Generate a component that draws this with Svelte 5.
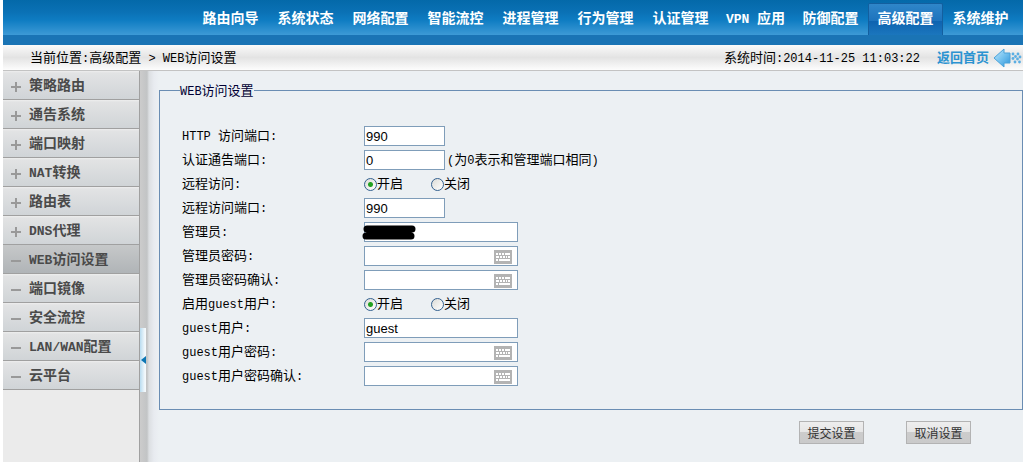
<script lang="ts">
	const nav = [
		'路由向导',
		'系统状态',
		'网络配置',
		'智能流控',
		'进程管理',
		'行为管理',
		'认证管理',
		'VPN 应用',
		'防御配置',
		'高级配置',
		'系统维护'
	];
	const activeNav = '高级配置';

	const menu = [
		{ label: '策略路由', group: true },
		{ label: '通告系统', group: true },
		{ label: '端口映射', group: true },
		{ label: 'NAT转换', group: true },
		{ label: '路由表', group: true },
		{ label: 'DNS代理', group: true },
		{ label: 'WEB访问设置', group: false },
		{ label: '端口镜像', group: false },
		{ label: '安全流控', group: false },
		{ label: 'LAN/WAN配置', group: false },
		{ label: '云平台', group: false }
	];
	const activeMenu = 'WEB访问设置';

	type Field = {
		id: string;
		label: string;
		kind: 'port' | 'radio' | 'text' | 'password';
		note?: string;
		masked?: boolean;
	};

	const fields: Field[] = [
		{ id: 'http-port', label: 'HTTP 访问端口:', kind: 'port' },
		{ id: 'notice-port', label: '认证通告端口:', kind: 'port', note: '(为0表示和管理端口相同)' },
		{ id: 'remote', label: '远程访问:', kind: 'radio' },
		{ id: 'remote-port', label: '远程访问端口:', kind: 'port' },
		{ id: 'admin', label: '管理员:', kind: 'text', masked: true },
		{ id: 'admin-pass', label: '管理员密码:', kind: 'password' },
		{ id: 'admin-pass2', label: '管理员密码确认:', kind: 'password' },
		{ id: 'guest-on', label: '启用guest用户:', kind: 'radio' },
		{ id: 'guest', label: 'guest用户:', kind: 'text' },
		{ id: 'guest-pass', label: 'guest用户密码:', kind: 'password' },
		{ id: 'guest-pass2', label: 'guest用户密码确认:', kind: 'password' }
	];

	let values: Record<string, string> = $state({
		'http-port': '990',
		'notice-port': '0',
		remote: 'on',
		'remote-port': '990',
		admin: '',
		'admin-pass': '',
		'admin-pass2': '',
		'guest-on': 'on',
		guest: 'guest',
		'guest-pass': '',
		'guest-pass2': ''
	});

	// Latin runs are set in a smaller monospace so they sit at half the Han width
	const runs = (text: string) => text.split(/([\x20-\x7e]+)/).filter(Boolean);
	const isLatin = (run: string) => /^[\x20-\x7e]/.test(run);
</script>

{#snippet mixed(text: string)}
	{#each runs(text) as run}{#if isLatin(run)}<span class="latin">{run}</span>{:else}{run}{/if}{/each}
{/snippet}

<div class="page">
	<nav class="topnav">
		{#each nav as item}
			<a href="#top" class:active={item === activeNav}>{@render mixed(item)}</a>
		{/each}
	</nav>

	<div class="crumbs">
		<span class="where">{@render mixed('当前位置:高级配置 > WEB访问设置')}</span>
		<span class="time">{@render mixed('系统时间:2014-11-25 11:03:22')}</span>
		<a class="home" href="#home">
			<span>返回首页</span>
			<svg width="29" height="20" viewBox="0 0 29 20" aria-hidden="true">
				<defs>
					<linearGradient id="arrow" x1="0" y1="0" x2="1" y2="1">
						<stop offset="0" stop-color="#c9e9fb" />
						<stop offset="0.5" stop-color="#74c2ef" />
						<stop offset="1" stop-color="#2e93d8" />
					</linearGradient>
				</defs>
				<path d="M1 10 L11 1 V5 H17 V15 H11 V19 Z" fill="url(#arrow)" stroke="#4aa3da" />
				<g fill="#5aaee3">
					<circle cx="20" cy="6" r="1.4" /><circle cx="25" cy="6" r="1.4" />
					<circle cx="22.5" cy="8.5" r="1.4" /><circle cx="27" cy="9" r="1.4" />
					<circle cx="20" cy="10.5" r="1.4" /><circle cx="24.5" cy="11" r="1.4" />
					<circle cx="22" cy="14" r="1.4" /><circle cx="26.5" cy="14" r="1.4" />
				</g>
			</svg>
		</a>
	</div>

	<div class="body">
		<aside>
			{#each menu as item}
				<a href="#menu" class:active={item.label === activeMenu}>
					<svg width="10" height="10" viewBox="0 0 10 10" aria-hidden="true">
						<path d={item.group ? 'M0 5H10M5 0V10' : 'M0 5H10'} stroke="#999" stroke-width="2" />
					</svg>
					<span>{@render mixed(item.label)}</span>
				</a>
			{/each}
		</aside>

		<div class="splitter">
			<button type="button" class="collapse" aria-label="收起菜单">
				<svg width="5" height="8" viewBox="0 0 5 8" aria-hidden="true"><path d="M0 4 L5 0 V8 Z" fill="#0b76b4" /></svg>
			</button>
		</div>

		<main>
			<form onsubmit={(e) => e.preventDefault()}>
				<fieldset>
					<legend>{@render mixed('WEB访问设置')}</legend>
					{#each fields as f}
						<div class="row">
							{#if f.kind === 'radio'}
								<span class="name" id={f.id}>{@render mixed(f.label)}</span>
								<div class="radios" role="radiogroup" aria-labelledby={f.id}>
									<label><input type="radio" name={f.id} value="on" bind:group={values[f.id]} /><span>开启</span></label>
									<label><input type="radio" name={f.id} value="off" bind:group={values[f.id]} /><span>关闭</span></label>
								</div>
							{:else}
								<label class="name" for={f.id}>{@render mixed(f.label)}</label>
								<div class="box" class:short={f.kind === 'port'}>
									{#if f.kind === 'password'}
										<input id={f.id} type="password" bind:value={values[f.id]} />
										<button type="button" class="keys" aria-label="软键盘">
											<svg width="18" height="14" viewBox="0 0 18 14" shape-rendering="crispEdges" aria-hidden="true">
												<rect width="18" height="14" fill="#b3b3b3" />
												<path
													d="M2 3h2v2H2zM5 3h2v2H5zM8 3h2v2H8zM11 3h5v2h-5zM2 6h3v2H2zM6 6h2v2H6zM9 6h2v2H9zM12 6h1v2h-1zM14 6h2v2h-2zM2 9h2v2H2zM5 9h11v2H5z"
													fill="#fff"
												/>
											</svg>
										</button>
									{:else}
										<input id={f.id} type="text" bind:value={values[f.id]} />
									{/if}
									{#if f.masked}
										<svg class="mask" width="56" height="18" viewBox="0 0 56 18" aria-hidden="true">
											<path d="M5 6 H50 M4 13 H49" stroke="#000" stroke-width="7" stroke-linecap="round" />
											<path d="M5 9 H49" stroke="#000" stroke-width="3" />
										</svg>
									{/if}
								</div>
								{#if f.note}<span class="note">{@render mixed(f.note)}</span>{/if}
							{/if}
						</div>
					{/each}
				</fieldset>
				<div class="actions">
					<button type="submit">提交设置</button>
					<button type="reset">取消设置</button>
				</div>
			</form>
		</main>
	</div>
</div>

<style>
	:global(body) {
		margin: 0;
		background: #fff;
	}

	.page {
		display: flex;
		flex-direction: column;
		box-sizing: border-box;
		min-height: 100vh;
		padding: 0 2px 0 3px;
		font: 13px/16px 'Noto Sans CJK SC', sans-serif;
		color: #000;
	}
	.latin {
		font-family: 'Liberation Mono', monospace;
		font-size: 12px;
		line-height: 12px;
		white-space: pre;
	}
	a {
		color: inherit;
		text-decoration: none;
	}

	/* top navigation */
	.topnav {
		display: flex;
		justify-content: flex-end;
		padding: 3px 5px 10px 0;
		background: linear-gradient(#0469a9, #0a71b5 12px, #0e7cc2 20px, #3d9ad6 35px, #1a74b5 35px);
		font-size: 14px;
		font-weight: bold;
		color: #fff;
	}
	.topnav a {
		box-sizing: border-box;
		width: 75px;
		height: 32px;
		line-height: 28px;
		text-align: center;
		white-space: nowrap;
	}
	.topnav .active {
		border: 1px solid #135f9f;
		border-bottom: 0;
		border-radius: 2px 2px 0 0;
		background: linear-gradient(#2f86c9, #1d73bd 17px, #0e63b0 17px, #1b76bd);
		line-height: 26px;
	}
	.topnav .latin,
	aside .latin {
		font-size: 13px;
	}

	/* breadcrumb bar */
	.crumbs {
		display: flex;
		align-items: center;
		height: 25px;
		padding: 0 1px 0 27px;
		border-bottom: 1px solid #c3c3c3;
		background: linear-gradient(#fafafa, #e3e3e3 50%, #fdfdfd);
	}
	.crumbs span {
		padding-bottom: 2px;
	}
	.crumbs .latin {
		padding: 0;
	}
	.time {
		margin-left: auto;
	}
	.home {
		display: flex;
		align-items: center;
		gap: 4px;
		margin-left: 17px;
		font-weight: bold;
		color: #2b93d1;
	}

	.body {
		display: flex;
		flex: 1;
	}

	/* side menu */
	aside {
		width: 136px;
		border-right: 1px solid #a0a0a0;
		background: #ebebeb;
		font-size: 14px;
		font-weight: bold;
		color: #4a4a4a;
	}
	aside a {
		display: flex;
		align-items: center;
		gap: 8px;
		height: 28px;
		padding-left: 8px;
		border-bottom: 1px solid #a0a0a0;
		background: linear-gradient(#eee, #e2e3e4 2px, #d0d4d7);
	}
	aside a.active {
		background: linear-gradient(#c6c8c9, #b0b4b7);
	}
	aside a > span {
		padding-bottom: 2px;
	}
	aside svg {
		margin-top: 3px;
	}

	.splitter {
		display: flex;
		width: 19px;
		padding-top: 257px;
		box-sizing: border-box;
		background: linear-gradient(90deg, #ccc, #c2c4c5 7px, #dcdfe2 9px, #e8ebf0 14px, #ecf0f3);
	}
	.collapse {
		display: flex;
		align-items: center;
		justify-content: flex-end;
		width: 6px;
		height: 64px;
		padding: 0;
		border: 0;
		background: linear-gradient(90deg, #b9dcf0, #f4f9fc 5px);
	}

	/* settings form */
	main {
		flex: 1;
		background: #ecf0f3;
	}
	fieldset {
		margin: 11px 0 0;
		padding: 26px 0 21px 22px;
		border: 1px solid #6a8db3;
	}
	legend {
		margin-left: -2px;
		padding: 0;
		color: #003;
	}
	.row {
		display: flex;
		align-items: center;
		height: 24px;
	}
	.name {
		width: 182px;
		padding-bottom: 3px;
	}
	.box {
		position: relative;
		display: flex;
		align-items: center;
		box-sizing: border-box;
		width: 154px;
		height: 20px;
		border: 1px solid #7f9db9;
		background: #fff;
	}
	.box.short {
		width: 81px;
	}
	.box input {
		flex: 1;
		min-width: 0;
		padding: 1px 1px 0;
		border: 0;
		outline: 0;
		background: none;
		font: 13px/17px 'Liberation Sans', sans-serif;
		color: #000;
	}
	.keys {
		display: flex;
		margin: 1px 5px 0 0;
		padding: 0;
		border: 0;
		background: none;
	}
	.mask {
		position: absolute;
		top: 0;
		left: -3px;
	}
	.note {
		margin-left: 2px;
		padding-bottom: 3px;
	}
	.radios {
		display: flex;
		gap: 28px;
	}
	.radios label {
		display: flex;
		align-items: center;
	}
	.radios span {
		padding-bottom: 3px;
	}
	.radios input {
		appearance: none;
		width: 13px;
		height: 13px;
		margin: 1px 0 0;
		border: 1px solid #33608f;
		border-radius: 50%;
		background: linear-gradient(135deg, #dcdcd7, #fff);
	}
	.radios input:checked {
		background: radial-gradient(circle, #21a121 2px, #fff0 3px), linear-gradient(135deg, #dcdcd7, #fff);
	}

	.actions {
		display: flex;
		justify-content: flex-end;
		gap: 42px;
		padding: 11px 52px 18px 0;
	}
	.actions button {
		width: 65px;
		height: 23px;
		padding: 0;
		border: 1px solid #b3b3b3;
		background: linear-gradient(#eee, #e6e6e6 10px, #ccc 10px, #cacaca);
		font: 12px/20px 'Noto Sans CJK SC', sans-serif;
		color: #333;
	}
</style>
